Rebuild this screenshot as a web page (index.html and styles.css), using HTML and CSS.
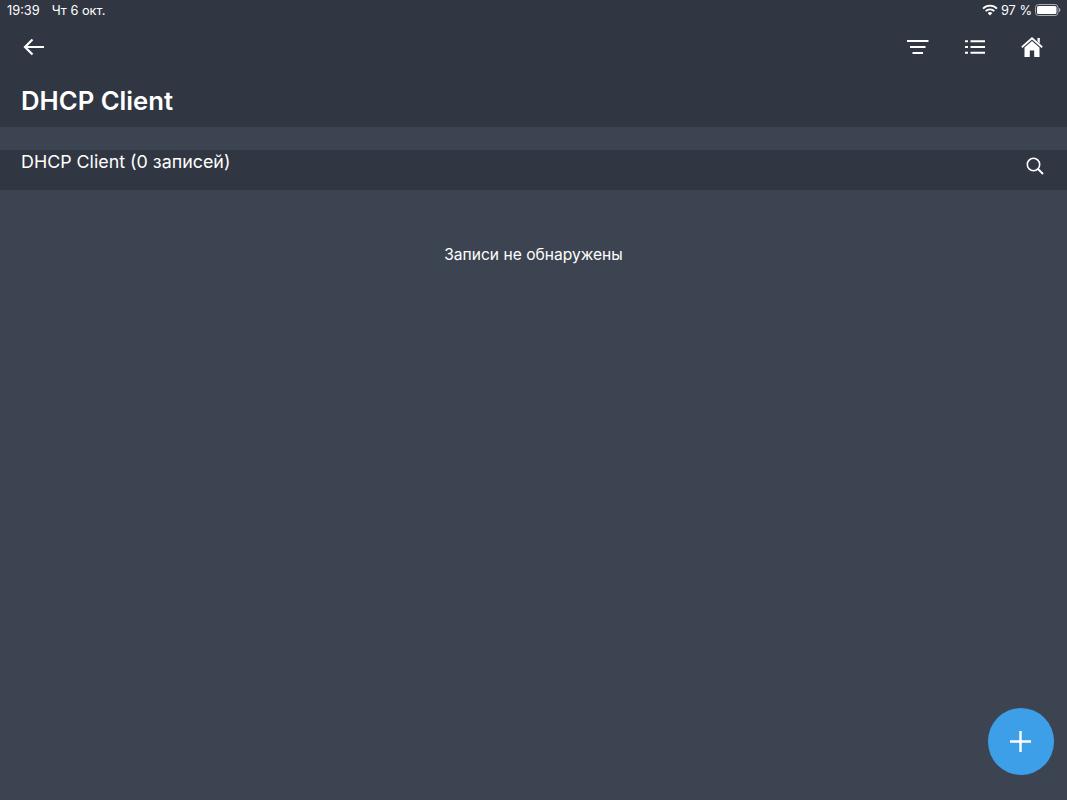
FILE: index.html
```html
<!DOCTYPE html>
<html lang="ru">
<head>
<meta charset="utf-8">
<title>DHCP Client</title>
<link rel="stylesheet" href="styles.css">
</head>
<body>
<div class="app">
  <header class="head">
    <div class="status">
      <div class="status-left"><span>19:39</span><span>Чт 6 окт.</span></div>
      <div class="status-right">
        <svg class="wifi" width="16" height="12" viewBox="0 0 16 12"><path d="M8 11.600 5.600 9.100a3.400 3.400 0 0 1 4.800 0zM4.300 7.800 3 6.500a7 7 0 0 1 10 0l-1.300 1.300a5.200 5.200 0 0 0-7.400 0zM1.700 5.200.4 3.900a10.700 10.700 0 0 1 15.200 0l-1.300 1.300a8.900 8.900 0 0 0-12.600 0z" fill="#fff"/></svg>
        <span>97 %</span>
        <svg class="battery" width="26" height="12" viewBox="0 0 26 12"><rect x=".5" y=".5" width="22.500" height="11" rx="3" fill="none" stroke="#a9adb3"/><rect x="2" y="2" width="19.500" height="8" rx="1.600" fill="#fff"/><path d="M24 4v4c.8-.3 1.400-1.100 1.400-2S24.800 4.300 24 4z" fill="#a9adb3"/></svg>
      </div>
    </div>
    <div class="toolbar">
      <svg class="back" width="21" height="18" viewBox="0 0 21 18"><path d="M21 9H2M9.500 1.500 2 9l7.500 7.500" fill="none" stroke="#fff" stroke-width="2.200"/></svg>
      <div class="actions">
        <svg width="22" height="14" viewBox="0 0 22 14"><path d="M0 1h21.500M3 7h15.500M5.500 13h10.500" stroke="#fff" stroke-width="2"/></svg>
        <svg width="20" height="14" viewBox="0 0 20 14"><path d="M5.500 1.200H20M5.500 7H20M5.500 12.800H20M0 1.200h3M0 7h3M0 12.800h3" stroke="#fff" stroke-width="2"/></svg>
        <svg width="22" height="20" viewBox="0 0 22 20"><path d="M.8 10.200 11 1.300l10.200 8.900" fill="none" stroke="#fff" stroke-width="1.800"/><path d="M16.500 1h2.300v5.500l-2.300-2z" fill="#fff"/><path fill-rule="evenodd" d="M11 4 3.500 10.500V20h15v-9.500zM8.800 13.500h4.400V20H8.800z" fill="#fff"/></svg>
      </div>
    </div>
    <h1 class="title">DHCP Client</h1>
  </header>
  <section class="list-bar">
    <span class="list-title">DHCP Client (0 записей)</span>
    <svg class="search" width="18" height="18" viewBox="0 0 18 18"><circle cx="7.500" cy="7.500" r="6.200" fill="none" stroke="#fff" stroke-width="1.600"/><path d="m12 12 5 5" stroke="#fff" stroke-width="2"/></svg>
  </section>
  <main class="content">
    <p class="empty">Записи не обнаружены</p>
  </main>
  <button class="fab" type="button" aria-label="Добавить">
    <svg width="21" height="21" viewBox="0 0 21 21"><path d="M10.500 0v21M0 10.500h21" stroke="#fff" stroke-width="2.400"/></svg>
  </button>
</div>
</body>
</html>
```
FILE: styles.css
```css
* { box-sizing: border-box; }
html, body { margin: 0; height: 100%; }
body { background: #3d4451; color: #fff; font-family: Inter, "Liberation Sans", sans-serif; overflow: hidden; }
.app { position: relative; height: 800px; display: flex; flex-direction: column; }
.head { height: 127px; background: #303642; display: flex; flex-direction: column; }
.status { height: 20px; padding: 0 6px 0 7px; display: flex; justify-content: space-between; align-items: center; font-size: 12.800px; }
.status-left { display: flex; gap: 12px; }
.status-right { display: flex; align-items: center; gap: 3px; }
.toolbar { height: 53px; padding: 0 24px 0 23px; display: flex; justify-content: space-between; align-items: center; }
.back { display: block; }
.actions { display: flex; align-items: center; gap: 36px; }
.title { margin: 11px 0 0; padding-left: 21px; font-size: 25.700px; line-height: 34px; font-weight: 600; }
.list-bar { margin-top: 23px; height: 40px; background: #303642; padding: 0 23px 0 21px; display: flex; justify-content: space-between; }
.list-title { font-size: 17.850px; line-height: 24px; }
.search { margin-top: 7px; }
.content { flex: 1; }
.empty { margin: 55px 0 0; text-align: center; font-size: 15.600px; line-height: 20px; }
.fab { position: absolute; left: 987.500px; top: 708px; width: 66.500px; height: 67px; border: 0; border-radius: 50%; background: #3c9fe8; display: flex; align-items: center; justify-content: center; padding: 0; }
```
